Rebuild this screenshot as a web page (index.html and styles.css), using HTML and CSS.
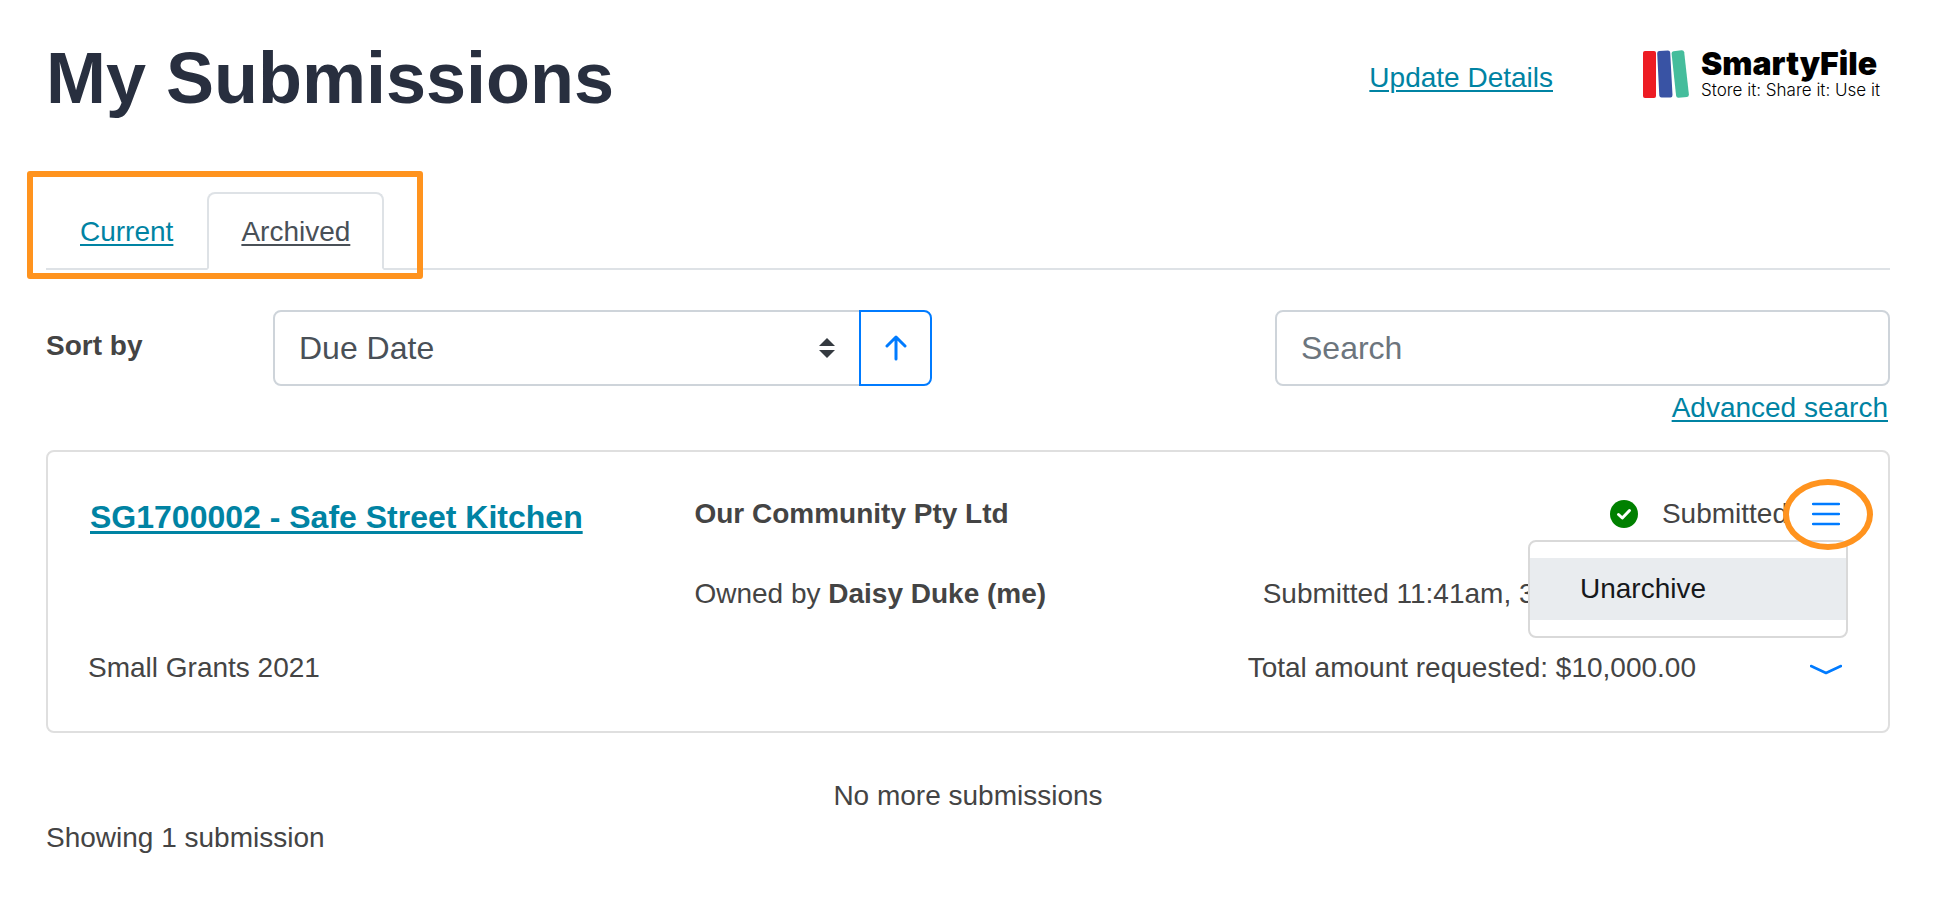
FILE: index.html
```
<!DOCTYPE html>
<html lang="en">
<head>
  <meta charset="UTF-8" />
  <meta name="viewport" content="width=device-width, initial-scale=1" />
  <title>My Submissions</title>
  <link rel="stylesheet" href="styles.css">
</head>
<body>
  <header class="page-header">
    <h1>My Submissions</h1>
    <a class="link" href="#">Update Details</a>
    <a class="logo" href="#">
      <svg class="logo-books" viewBox="0 0 46 48" aria-hidden="true">
        <rect x="0" y="1" width="13" height="47" rx="2" fill="#ed1c24" />
        <path d="M16 1 L25 0.5 Q27 0.5 27.2 2.5 L29.5 45 Q29.5 47.5 27.5 47.5 L18.500 47.500 Q16.500 47.500 16.300 45.500 L14.200 3.500 Q14 1.300 16 1z" fill="#3953a4" />
        <path d="M30.500 1.200 L38.500 0.200 Q40.800 0 41.200 2.200 L45.900 44.500 Q46 46.800 44 47.100 L35.500 47.700 Q33.400 47.800 33.100 45.700 L28.600 3.800 Q28.400 1.600 30.500 1.200z" fill="#45bd9c" />
      </svg>
      <span class="logo-text">
        <span class="logo-name">SmartyFile</span>
        <span class="logo-tagline">Store it: Share it: Use it</span>
      </span>
    </a>
  </header>

  <main>
    <nav class="tabs">
      <a class="tab" href="#">Current</a>
      <a class="tab active" href="#" aria-current="page">Archived</a>
      <span class="tabs-highlight"></span>
    </nav>

    <form class="filters">
      <label class="sort-label" for="sortBy">Sort by</label>
      <div class="sort-group">
        <div class="select-wrap">
          <select id="sortBy">
            <option>Due Date</option>
          </select>
          <svg class="caret" viewBox="0 0 16 20" aria-hidden="true">
            <path d="M8 0 L16 8 H0z M0 12 H16 L8 20z" fill="#343a40" />
          </svg>
        </div>
        <button class="sort-button" type="button" aria-label="Sort ascending">
          <svg viewBox="0 0 22 26" aria-hidden="true">
            <path d="M11 24 V3 M2 11 L11 2 L20 11" />
          </svg>
        </button>
      </div>
      <div class="search">
        <input type="search" placeholder="Search" aria-label="Search" />
        <a class="link" href="#">Advanced search</a>
      </div>
    </form>

    <article class="card">
      <div class="card-row">
        <h2><a class="link" href="#">SG1700002 - Safe Street Kitchen</a></h2>
        <strong>Our Community Pty Ltd</strong>
        <div class="status">
          <svg class="status-icon" viewBox="0 0 28 28" aria-hidden="true">
            <circle cx="14" cy="14" r="14" fill="#008000" />
            <path d="M8.500 14.500 L12.300 18 L19.500 10.500" />
          </svg>
          <span>Submitted</span>
          <div class="menu">
            <button class="menu-button" type="button" aria-label="Actions" aria-expanded="true">
              <svg viewBox="0 0 28 24" aria-hidden="true">
                <path d="M1 2 H27 M1 12 H27 M1 22 H27" />
              </svg>
            </button>
            <div class="dropdown">
              <button class="dropdown-item" type="button">Unarchive</button>
            </div>
            <span class="menu-highlight"></span>
          </div>
        </div>
      </div>
      <div class="card-row">
        <span></span>
        <span>Owned by <strong>Daisy Duke (me)</strong></span>
        <span class="detail">Submitted 11:41am, 3 August 2021</span>
      </div>
      <div class="card-row">
        <span>Small Grants 2021</span>
        <span></span>
        <div class="total">
          <span>Total amount requested: $10,000.00</span>
          <button class="expand-button" type="button" aria-label="Show details">
            <svg viewBox="0 0 32 12" aria-hidden="true">
              <path d="M1 2 L16 9 L31 2" />
            </svg>
          </button>
        </div>
      </div>
    </article>

    <p class="no-more">No more submissions</p>
    <p>Showing 1 submission</p>
  </main>
</body>
</html>
```
FILE: styles.css
```
:root {
  --text: #444;
  --heading: #282f3f;
  --link: #0083a3;
  --blue: #007bff;
  --orange: #ff931e;
  --border: #ced4da;
}
* {
  box-sizing: border-box;
}
body {
  margin: 0;
  padding: 35px 58px 32px 46px;
  background: #fff;
  color: var(--text);
  font-family: "Liberation Sans", Arial, sans-serif;
  font-size: 28px;
  line-height: 42px;
}
h1,
h2,
p {
  margin: 0;
}
button,
input,
select {
  font-family: inherit;
}
button {
  padding: 0;
  background: none;
  border: none;
  cursor: pointer;
}
svg {
  display: block;
  fill: none;
}
.link,
.tab {
  color: var(--link);
  text-decoration-thickness: 2px;
  text-underline-offset: 3px;
}
.link {
  padding: 0 2px;
}

/* header */
.page-header {
  display: flex;
  align-items: center;
  margin-bottom: 71px;
}
h1 {
  color: var(--heading);
  font-size: 72px;
  line-height: 86px;
  margin-right: auto;
}
.logo {
  display: flex;
  align-items: center;
  gap: 12px;
  margin: 0 14px 8px 88px;
  color: #000;
  text-decoration: none;
}
.logo-books {
  width: 46px;
  height: 48px;
}
.logo-text {
  display: flex;
  flex-direction: column;
  width: 175px;
}
.logo-name {
  font-family: Inter, sans-serif;
  font-size: 32px;
  font-weight: 900;
  line-height: 32px;
}
.logo-tagline {
  font-family: Inter, sans-serif;
  font-size: 17px;
  font-weight: 300;
  line-height: 20px;
  white-space: nowrap;
}

/* tabs */
.tabs {
  position: relative;
  display: flex;
  border-bottom: 2px solid #dee2e6;
  margin-bottom: 40px;
}
.tab {
  padding: 17px 32px 15px;
  border: 2px solid transparent;
  border-radius: 8px 8px 0 0;
  margin-bottom: -2px;
}
.tab.active {
  color: #495057;
  background: #fff;
  border-color: #dee2e6 #dee2e6 #fff;
}
.tabs-highlight {
  position: absolute;
  top: -21px;
  left: -19px;
  width: 396px;
  height: 108px;
  border: 6px solid var(--orange);
  border-radius: 3px;
}

/* sort and search */
.filters {
  display: flex;
  align-items: flex-start;
  margin-bottom: 21px;
}
.sort-label {
  flex: 0 0 227px;
  padding-top: 15px;
  font-weight: bold;
}
.sort-group {
  display: flex;
  flex: 0 1 659px;
}
.select-wrap {
  position: relative;
  flex: 1;
}
select,
input {
  appearance: none;
  width: 100%;
  height: 76px;
  padding: 0 24px;
  border: 2px solid var(--border);
  border-radius: 8px;
  background: #fff;
  color: #495057;
  font-size: 32px;
}
select {
  border-radius: 8px 0 0 8px;
}
input::placeholder {
  color: #6c757d;
}
.caret {
  position: absolute;
  top: 28px;
  right: 26px;
  width: 16px;
  height: 20px;
  pointer-events: none;
}
.sort-button {
  position: relative;
  display: flex;
  align-items: center;
  justify-content: center;
  width: 73px;
  margin-left: -2px;
  border: 2px solid var(--blue);
  border-radius: 0 8px 8px 0;
}
.sort-button svg {
  width: 22px;
  height: 26px;
}
.sort-button path {
  stroke: var(--blue);
  stroke-width: 3;
  stroke-linecap: round;
  stroke-linejoin: round;
}
.search {
  display: flex;
  flex: 0 1 615px;
  flex-direction: column;
  align-items: flex-end;
  gap: 1px;
  margin-left: auto;
}

/* submission card */
.card {
  display: flex;
  flex-direction: column;
  gap: 32px;
  padding: 41px 40px 42px;
  border: 2px solid #dfdfdf;
  border-radius: 8px;
  margin-bottom: 42px;
}
.card-row {
  display: grid;
  grid-template-columns: 34% 1fr auto;
  column-gap: 8px;
}
h2 {
  font-size: 32px;
  line-height: 48px;
}
h2 .link {
  text-decoration-thickness: 3px;
}
.status,
.total {
  display: flex;
  align-items: center;
}
.status {
  height: 42px;
}
.status-icon {
  width: 28px;
  height: 28px;
  margin-right: 24px;
}
.status-icon path {
  stroke: #fff;
  stroke-width: 3;
  stroke-linecap: round;
  stroke-linejoin: round;
}
.menu {
  position: relative;
  padding: 0 8px 0 24px;
}
.menu-button {
  display: block;
}
.menu-button svg {
  width: 28px;
  height: 24px;
}
.menu-button path,
.expand-button path {
  stroke: var(--blue);
  stroke-width: 2.5;
  stroke-linecap: round;
  stroke-linejoin: round;
}
.dropdown {
  position: absolute;
  top: 38px;
  right: 0;
  z-index: 10;
  width: 320px;
  padding: 16px 0;
  background: #fff;
  border: 2px solid #d9d9d9;
  border-radius: 8px;
}
.dropdown-item {
  display: block;
  width: 100%;
  padding: 10px 50px;
  background: #e9ecef;
  color: #16181b;
  font-size: 28px;
  line-height: 42px;
  text-align: left;
}
.menu-highlight {
  position: absolute;
  top: -23px;
  right: -25px;
  z-index: 11;
  width: 90px;
  height: 71px;
  border: 6px solid var(--orange);
  border-radius: 50%;
  pointer-events: none;
}
.detail {
  padding-right: 150px;
}
.expand-button {
  margin: 4px 6px 0 114px;
}
.expand-button svg {
  width: 32px;
  height: 12px;
}

.no-more {
  text-align: center;
}
```
